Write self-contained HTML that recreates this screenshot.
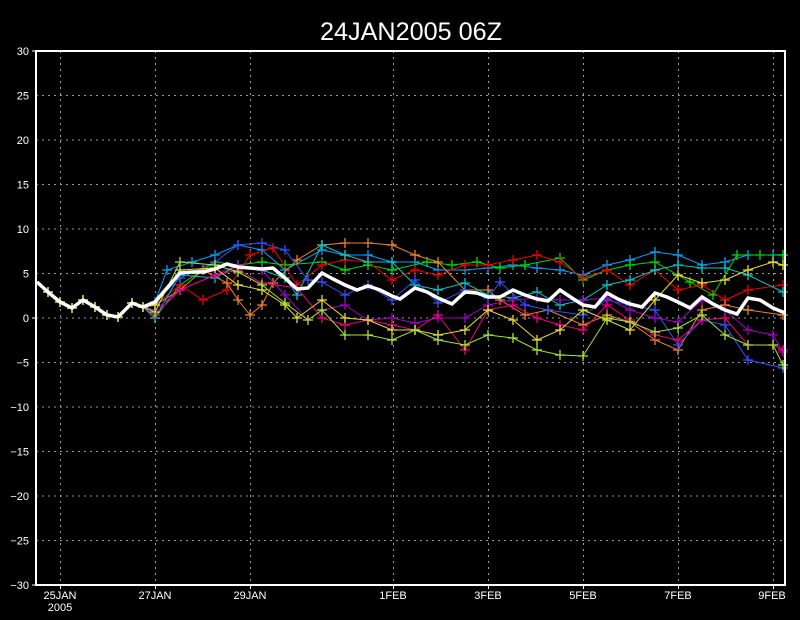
<!DOCTYPE html>
<html><head><meta charset="utf-8"><style>
html,body{margin:0;padding:0;background:#000;width:800px;height:620px;overflow:hidden}
svg{display:block}
text{font-family:"Liberation Sans",sans-serif;fill:#fff}
</style></head><body>
<svg width="800" height="620" viewBox="0 0 800 620" xmlns="http://www.w3.org/2000/svg">
<defs>
<marker id="m1" markerUnits="userSpaceOnUse" markerWidth="12" markerHeight="12" refX="6" refY="6" overflow="visible"><path d="M1 6H11M6 1V11" stroke="#00a0ff" stroke-width="1.3"/></marker>
<marker id="m2" markerUnits="userSpaceOnUse" markerWidth="12" markerHeight="12" refX="6" refY="6" overflow="visible"><path d="M1 6H11M6 1V11" stroke="#00dc00" stroke-width="1.3"/></marker>
<marker id="m3" markerUnits="userSpaceOnUse" markerWidth="12" markerHeight="12" refX="6" refY="6" overflow="visible"><path d="M1 6H11M6 1V11" stroke="#f00000" stroke-width="1.3"/></marker>
<marker id="m4" markerUnits="userSpaceOnUse" markerWidth="12" markerHeight="12" refX="6" refY="6" overflow="visible"><path d="M1 6H11M6 1V11" stroke="#f08228" stroke-width="1.3"/></marker>
<marker id="m5" markerUnits="userSpaceOnUse" markerWidth="12" markerHeight="12" refX="6" refY="6" overflow="visible"><path d="M1 6H11M6 1V11" stroke="#00c8c8" stroke-width="1.3"/></marker>
<marker id="m6" markerUnits="userSpaceOnUse" markerWidth="12" markerHeight="12" refX="6" refY="6" overflow="visible"><path d="M1 6H11M6 1V11" stroke="#3050ff" stroke-width="1.3"/></marker>
<marker id="m7" markerUnits="userSpaceOnUse" markerWidth="12" markerHeight="12" refX="6" refY="6" overflow="visible"><path d="M1 6H11M6 1V11" stroke="#a000c8" stroke-width="1.3"/></marker>
<marker id="m8" markerUnits="userSpaceOnUse" markerWidth="12" markerHeight="12" refX="6" refY="6" overflow="visible"><path d="M1 6H11M6 1V11" stroke="#f00082" stroke-width="1.3"/></marker>
<marker id="m9" markerUnits="userSpaceOnUse" markerWidth="12" markerHeight="12" refX="6" refY="6" overflow="visible"><path d="M1 6H11M6 1V11" stroke="#e6dc32" stroke-width="1.3"/></marker>
<marker id="m10" markerUnits="userSpaceOnUse" markerWidth="12" markerHeight="12" refX="6" refY="6" overflow="visible"><path d="M1 6H11M6 1V11" stroke="#a0e632" stroke-width="1.3"/></marker>
</defs>
<rect width="800" height="620" fill="#000"/>
<text x="320" y="40" font-size="25" textLength="182" lengthAdjust="spacingAndGlyphs" style="font-weight:normal">24JAN2005 06Z</text>
<g stroke="#999" stroke-width="1" stroke-dasharray="2,4" fill="none">
<path d="M36 95.5H785M36 140H785M36 184.5H785M36 229H785M36 273.5H785M36 318H785M36 362.5H785M36 407H785M36 451.5H785M36 496H785M36 540.5H785"/>
<path d="M60.5 51V585M155.5 51V585M250.5 51V585M393.5 51V585M488.5 51V585M583.5 51V585M678.5 51V585M773.5 51V585"/>
</g>
<g font-size="11" text-anchor="end">
<text x="29" y="55">30</text><text x="29" y="99.5">25</text><text x="29" y="144">20</text><text x="29" y="188.5">15</text><text x="29" y="233">10</text><text x="29" y="277.5">5</text><text x="29" y="322">0</text><text x="29" y="366.5">−5</text><text x="29" y="411">−10</text><text x="29" y="455.5">−15</text><text x="29" y="500">−20</text><text x="29" y="544.5">−25</text><text x="29" y="589">−30</text>
</g>
<g font-size="11" text-anchor="middle">
<text x="60" y="599">25JAN</text><text x="60" y="611">2005</text><text x="155" y="599">27JAN</text><text x="250" y="599">29JAN</text><text x="393" y="599">1FEB</text><text x="488" y="599">3FEB</text><text x="583" y="599">5FEB</text><text x="678" y="599">7FEB</text><text x="772" y="599">9FEB</text>
</g>
<g fill="none" stroke-width="1">
<polyline stroke="#00a0ff" marker-mid="url(#m1)" marker-end="url(#m1)" points="37,282 48,292 60,302 72,308 83,300 95,307 107,315 118,317 132,303 143,307 155,302 167,270 192,262 215,255 238,245 262,250 285,270 322,250 345,255 368,255 392,262 415,262 438,270 465,270 488,268 513,265 537,268 560,270 583,275 607,265 630,260 655,252 678,255 702,265 725,262 748,255 773,255 783,255"/>
<polyline stroke="#00dc00" marker-mid="url(#m2)" marker-end="url(#m2)" points="37,282 48,292 60,302 72,308 83,300 95,307 107,315 118,317 132,303 143,307 155,318 180,285 215,262 238,265 262,262 285,265 322,262 345,270 368,265 392,270 427,262 452,265 477,262 500,268 525,265 560,258 583,280 607,270 630,265 655,262 690,282 713,295 737,255 760,255 783,255"/>
<polyline stroke="#f00000" marker-mid="url(#m3)" marker-end="url(#m3)" points="37,282 48,292 60,302 72,308 83,300 95,307 107,315 118,317 132,303 143,307 155,305 180,285 203,300 227,290 250,255 273,248 297,285 322,265 345,260 368,262 392,280 415,270 438,275 465,265 488,265 513,260 537,255 560,262 583,278 607,270 630,285 655,270 678,290 702,285 725,300 748,290 783,285"/>
<polyline stroke="#f08228" marker-mid="url(#m4)" marker-end="url(#m4)" points="37,282 48,292 60,302 72,308 83,300 95,307 107,315 118,317 132,303 143,307 155,305 180,290 203,270 227,283 238,300 250,315 262,305 273,283 297,260 322,245 345,243 368,243 392,245 415,255 438,262 465,290 488,290 500,300 525,315 548,310 583,325 607,315 630,322 655,340 678,350 702,310 725,305 748,310 783,315"/>
<polyline stroke="#00c8c8" marker-mid="url(#m5)" marker-end="url(#m5)" points="37,282 48,292 60,302 72,308 83,300 95,307 107,315 118,317 132,303 143,307 155,318 180,275 215,278 238,265 262,270 285,278 297,295 322,245 345,255 368,262 392,262 415,285 438,290 465,283 488,295 513,298 537,292 560,305 583,300 607,285 630,280 655,270 678,265 702,268 725,268 748,275 783,292"/>
<polyline stroke="#3050ff" marker-mid="url(#m6)" marker-end="url(#m6)" points="37,282 48,292 60,302 72,308 83,300 95,307 107,315 118,317 132,303 143,307 155,302 180,278 215,262 238,245 262,243 285,250 308,280 322,282 345,295 368,285 392,300 415,280 438,303 465,290 488,298 500,282 525,305 548,310 583,315 607,300 630,305 655,310 678,345 702,320 725,325 748,360 783,368"/>
<polyline stroke="#a000c8" marker-mid="url(#m7)" marker-end="url(#m7)" points="37,282 48,292 60,302 72,308 83,300 95,307 107,315 118,317 132,303 143,307 155,310 180,290 215,275 238,265 262,270 285,295 308,320 322,310 345,305 368,320 392,318 415,323 438,318 465,318 488,305 513,300 537,298 560,300 583,300 607,298 630,310 655,318 678,322 702,300 725,310 748,330 773,335 783,352"/>
<polyline stroke="#f00082" marker-mid="url(#m8)" marker-end="url(#m8)" points="37,282 48,292 60,302 72,308 83,300 95,307 107,315 118,317 132,303 143,307 155,315 180,290 215,275 238,270 262,283 297,288 322,318 345,325 368,320 392,325 415,330 438,315 465,350 488,310 513,305 537,318 560,325 583,330 607,305 630,320 655,335 678,340 702,320 725,318 748,345 773,345 783,350"/>
<polyline stroke="#e6dc32" marker-mid="url(#m9)" marker-end="url(#m9)" points="37,282 48,292 60,302 72,308 83,300 95,307 107,315 118,317 132,303 143,307 155,305 180,270 215,268 238,285 262,290 285,305 297,318 322,300 345,318 368,320 392,330 415,330 438,335 465,330 488,310 513,320 537,340 560,330 583,310 607,320 630,330 655,300 678,275 702,283 725,280 748,270 773,262 783,265"/>
<polyline stroke="#a0e632" marker-mid="url(#m10)" marker-end="url(#m10)" points="37,282 48,292 60,302 72,308 83,300 95,307 107,315 118,317 132,303 143,307 155,312 180,262 215,265 238,272 262,285 285,303 308,320 322,310 345,335 368,335 392,340 415,330 438,340 465,345 488,335 513,338 537,350 560,355 583,356 607,318 630,322 655,332 678,328 702,315 725,335 748,345 773,345 783,365"/>
</g>
<polyline fill="none" stroke="#fff" stroke-width="3.5" points="37,282 48,292 60,302 72,308 83,300 95,307 107,315 118,317 132,303 143,307 155,302 167,288 180,273 192,272 203,272 215,269 227,264 238,267 250,268 262,269 273,268 285,278 297,289 308,288 322,273 333,279 345,285 357,290 368,286 380,290 392,296 400,299 415,288 427,292 438,298 452,304 465,292 477,293 488,297 500,297 513,290 525,295 537,299 548,301 560,290 572,298 583,305 595,307 607,293 618,299 630,304 642,307 655,293 667,297 678,302 690,308 702,297 713,304 725,310 737,314 748,298 760,300 773,308 785,313"/>
<rect x="36" y="51" width="749" height="534" fill="none" stroke="#fff" stroke-width="2"/>
<g stroke="#fff" stroke-width="1"><path d="M32 51H36M32 318H36M32 585H36M60.5 585V589M155.5 585V589M250.5 585V589M393.5 585V589M488.5 585V589M583.5 585V589M678.5 585V589M773.5 585V589"/></g>
</svg>
</body></html>
